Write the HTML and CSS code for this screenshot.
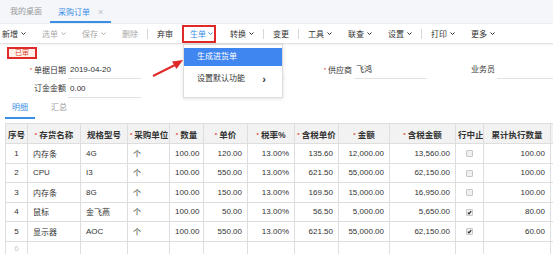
FILE: index.html
```html
<!DOCTYPE html>
<html lang="zh">
<head>
<meta charset="utf-8">
<link rel="stylesheet" href="styles.css">
</head>
<body>
<div class="page">
  <div class="tabbar">
    <span class="tab">我的桌面</span>
    <span class="tab active">采购订单<span class="close">×</span></span>
  </div>

  <div class="toolbar">
    <span class="tb first">新增<svg class="chev" viewBox="0 0 5 3"><path d="M0.5 0.5L2.5 2.5L4.5 0.5"/></svg></span>
    <span class="tb off">选单<svg class="chev" viewBox="0 0 5 3"><path d="M0.5 0.5L2.5 2.5L4.5 0.5"/></svg></span>
    <span class="tb off">保存<svg class="chev" viewBox="0 0 5 3"><path d="M0.5 0.5L2.5 2.5L4.5 0.5"/></svg></span>
    <span class="tb off">删除</span>
    <span class="sep"></span>
    <span class="tb">弃审</span>
    <span class="tb mark">生单<svg class="chev" viewBox="0 0 5 3"><path d="M0.5 0.5L2.5 2.5L4.5 0.5"/></svg>
      <div class="menu">
        <div class="menu-item hl">生成进货单</div>
        <div class="menu-item">设置默认功能<span class="arr">›</span></div>
      </div>
    </span>
    <span class="tb">转换<svg class="chev" viewBox="0 0 5 3"><path d="M0.5 0.5L2.5 2.5L4.5 0.5"/></svg></span>
    <span class="sep"></span>
    <span class="tb">变更</span>
    <span class="sep"></span>
    <span class="tb">工具<svg class="chev" viewBox="0 0 5 3"><path d="M0.5 0.5L2.5 2.5L4.5 0.5"/></svg></span>
    <span class="tb">联查<svg class="chev" viewBox="0 0 5 3"><path d="M0.5 0.5L2.5 2.5L4.5 0.5"/></svg></span>
    <span class="tb">设置<svg class="chev" viewBox="0 0 5 3"><path d="M0.5 0.5L2.5 2.5L4.5 0.5"/></svg></span>
    <span class="sep"></span>
    <span class="tb">打印<svg class="chev" viewBox="0 0 5 3"><path d="M0.5 0.5L2.5 2.5L4.5 0.5"/></svg></span>
    <span class="tb">更多<svg class="chev" viewBox="0 0 5 3"><path d="M0.5 0.5L2.5 2.5L4.5 0.5"/></svg></span>
  </div>

  <div class="status"><span class="stamp">已审</span></div>

  <div class="form">
    <div class="field"><span class="label"><i class="req">*</i>单据日期</span><span class="input">2019-04-20</span></div>
    <div class="field"><span class="label"></span><span class="input"></span></div>
    <div class="field"><span class="label"><i class="req">*</i>供应商</span><span class="input">飞鸿</span></div>
    <div class="field"><span class="label">业务员</span><span class="input"></span></div>
    <div class="field"><span class="label">订金金额</span><span class="input">0.00</span></div>
  </div>

  <div class="subtabs">
    <span class="subtab active">明细</span>
    <span class="subtab">汇总</span>
  </div>

  <table class="grid">
    <colgroup>
      <col class="c-no"><col class="c-name"><col class="c-spec"><col class="c-unit"><col class="c-qty"><col class="c-price"><col class="c-rate"><col class="c-tprice"><col class="c-amt"><col class="c-tamt"><col class="c-stop"><col class="c-exec"><col class="c-more">
    </colgroup>
    <thead>
      <tr>
        <th>序号</th>
        <th><i class="req">*</i>存货名称</th>
        <th>规格型号</th>
        <th><i class="req">*</i>采购单位</th>
        <th><i class="req">*</i>数量</th>
        <th><i class="req">*</i>单价</th>
        <th><i class="req">*</i>税率%</th>
        <th><i class="req">*</i>含税单价</th>
        <th><i class="req">*</i>金额</th>
        <th><i class="req">*</i>含税金额</th>
        <th>行中止</th>
        <th>累计执行数量</th>
        <th></th>
      </tr>
    </thead>
    <tbody>
      <tr>
        <td class="ctr">1</td><td>内存条</td><td>4G</td><td>个</td>
        <td class="num">100.00</td><td class="num">120.00</td><td class="num">13.00%</td><td class="num">135.60</td>
        <td class="num">12,000.00</td><td class="num">13,560.00</td><td class="ctr"><span class="cb"></span></td><td class="num">100.00</td><td></td>
      </tr>
      <tr>
        <td class="ctr">2</td><td>CPU</td><td>I3</td><td>个</td>
        <td class="num">100.00</td><td class="num">550.00</td><td class="num">13.00%</td><td class="num">621.50</td>
        <td class="num">55,000.00</td><td class="num">62,150.00</td><td class="ctr"><span class="cb"></span></td><td class="num">100.00</td><td></td>
      </tr>
      <tr>
        <td class="ctr">3</td><td>内存条</td><td>8G</td><td>个</td>
        <td class="num">100.00</td><td class="num">150.00</td><td class="num">13.00%</td><td class="num">169.50</td>
        <td class="num">15,000.00</td><td class="num">16,950.00</td><td class="ctr"><span class="cb"></span></td><td class="num">100.00</td><td></td>
      </tr>
      <tr>
        <td class="ctr">4</td><td>鼠标</td><td>金飞燕</td><td>个</td>
        <td class="num">100.00</td><td class="num">50.00</td><td class="num">13.00%</td><td class="num">56.50</td>
        <td class="num">5,000.00</td><td class="num">5,650.00</td><td class="ctr"><span class="cb on"><svg viewBox="0 0 6 6"><path d="M1 3.2L2.4 4.6L5 1.4"/></svg></span></td><td class="num">80.00</td><td></td>
      </tr>
      <tr>
        <td class="ctr">5</td><td>显示器</td><td>AOC</td><td>个</td>
        <td class="num">100.00</td><td class="num">550.00</td><td class="num">13.00%</td><td class="num">621.50</td>
        <td class="num">55,000.00</td><td class="num">62,150.00</td><td class="ctr"><span class="cb on"><svg viewBox="0 0 6 6"><path d="M1 3.2L2.4 4.6L5 1.4"/></svg></span></td><td class="num">60.00</td><td></td>
      </tr>
      <tr class="blank">
        <td class="ctr faint">6</td><td></td><td></td><td></td><td></td><td></td><td></td><td></td><td></td><td></td><td></td><td></td><td></td>
      </tr>
    </tbody>
  </table>

  <svg class="arrow" viewBox="0 0 40 24" width="40" height="24">
    <path class="shaft" d="M3 19L25 8"/>
    <path class="head" d="M33 3L22 4.5L26.5 12Z"/>
  </svg>
</div>
</body>
</html>
```

FILE: styles.css
```css
* { box-sizing: border-box; }

html, body {
  margin: 0;
  padding: 0;
  background: #fff;
}

body {
  width: 553px;
  height: 254px;
  overflow: hidden;
  font-family: "Liberation Sans", "Noto Sans CJK SC", sans-serif;
  font-size: 8px;
  color: #333;
}

.page {
  position: relative;
  width: 553px;
  height: 254px;
  overflow: hidden;
}

/* ---- top tabs ---- */
.tabbar {
  height: 24px;
  background: #f4f6fa;
  display: flex;
  align-items: flex-end;
  padding-left: 10px;
  border-bottom: 1px solid #eceff4;
}

.tab {
  height: 23px;
  line-height: 18px;
  padding-top: 3px;
  color: #999;
  margin-right: 8px;
}

.tab.active {
  color: #3a8ee6;
  padding: 3px 8px 0 8px;
  border-bottom: 2px solid #3a8ee6;
}

.close {
  color: #bbb;
  margin-left: 8px;
  font-size: 9px;
}

/* ---- toolbar ---- */
.toolbar {
  height: 20px;
  display: flex;
  align-items: center;
  margin-left: -6px;
  border-bottom: 1px solid #e3e3e3;
  box-shadow: 0 1px 2px rgba(0, 0, 0, 0.06);
  position: relative;
  z-index: 2;
}

.tb {
  display: flex;
  align-items: center;
  padding: 0 8px;
  height: 18px;
  color: #333;
  white-space: nowrap;
}

.tb.off { color: #aaa; }

.chev {
  width: 5px;
  height: 3px;
  margin-left: 3px;
  fill: none;
  stroke: currentColor;
  stroke-width: 1;
}

.sep {
  width: 1px;
  height: 10px;
  background: #d6d6d6;
  margin: 0 1px;
}

.tb.mark {
  position: relative;
  color: #3a8ee6;
  border: 2px solid #e02a2a;
  padding: 0 1px 0 6px;
  margin: 0 6px 0 1px;
}

.tb.mark .chev { margin-left: 2px; stroke: #3a8ee6; }

/* ---- dropdown ---- */
.menu {
  position: absolute;
  left: -1px;
  top: 17px;
  width: 100px;
  height: 54px;
  background: #fff;
  border: 1px solid #dcdcdc;
  box-shadow: 0 1px 4px rgba(0, 0, 0, 0.12);
  padding-top: 3px;
}

.menu-item {
  height: 18px;
  line-height: 18px;
  padding-left: 13px;
  color: #333;
  display: flex;
  align-items: center;
}

.menu-item + .menu-item { margin-top: 4px; }

.menu-item.hl {
  background: #3f86f0;
  color: #fff;
}

.arr {
  margin-left: auto;
  margin-right: 16px;
  font-size: 11px;
  font-weight: bold;
  color: #333;
}

/* ---- status stamp ---- */
.status {
  height: 16px;
  padding: 3px 0 0 7px;
  display: flex;
}

.stamp {
  width: 30px;
  height: 12px;
  border: 2px solid #e02a2a;
  background: #fdf1ea;
  color: #e0432a;
  font-size: 7px;
  line-height: 8px;
  text-align: center;
}

/* ---- form ---- */
.form {
  display: grid;
  grid-template-columns: repeat(4, 143px);
  grid-auto-rows: 19px;
  padding-left: 20px;
}

.field {
  display: flex;
  align-items: flex-end;
}

.label {
  width: 48px;
  text-align: right;
  padding-right: 2px;
  line-height: 16px;
  height: 17px;
  color: #333;
  white-space: nowrap;
}

.input {
  width: 73px;
  height: 17px;
  line-height: 16px;
  border-bottom: 1px solid #e2e2e2;
  padding-left: 2px;
  color: #333;
}

.req {
  font-style: normal;
  color: #e0432a;
  font-size: 6px;
  margin-right: 2px;
  vertical-align: 1px;
}

/* ---- sub tabs ---- */
.subtabs {
  display: flex;
  height: 21px;
  padding-left: 5px;
}

.subtab {
  width: 30px;
  text-align: center;
  line-height: 19px;
  color: #999;
  margin-right: 9px;
}

.subtab.active {
  color: #3a8ee6;
  border-bottom: 2px solid #3a8ee6;
}

/* ---- grid ---- */
.grid {
  margin: 4px 0 0 5px;
  border-collapse: collapse;
  table-layout: fixed;
  width: 565px;
}

.c-no { width: 22px; }
.c-name { width: 53px; }
.c-spec { width: 47px; }
.c-unit { width: 42px; }
.c-qty { width: 34px; }
.c-price { width: 44px; }
.c-rate { width: 47px; }
.c-tprice { width: 44px; }
.c-amt { width: 51px; }
.c-tamt { width: 66px; }
.c-stop { width: 28px; }
.c-exec { width: 67px; }
.c-more { width: 20px; }

.grid th,
.grid td {
  border: 1px solid #dedede;
  padding: 0 5px;
  white-space: nowrap;
  overflow: hidden;
}

.grid th {
  height: 20px;
  background: #f2f2f2;
  font-weight: bold;
  font-size: 8.5px;
  text-align: center;
  color: #333;
  padding: 0 2px;
}

.grid td {
  height: 19.5px;
  text-align: left;
}

.grid td.num { text-align: right; }
.grid td.ctr { text-align: center; padding: 0; }
.grid td.faint { color: #ccc; }

.grid tr.blank td {
  vertical-align: top;
  padding-top: 2px;
  line-height: 9px;
}

.cb {
  display: inline-block;
  width: 7px;
  height: 7px;
  border: 1px solid #c8c8c8;
  background: #f0f0f0;
  border-radius: 1px;
  vertical-align: middle;
  position: relative;
}

.cb.on svg {
  position: absolute;
  left: 0;
  top: 0;
  width: 5px;
  height: 5px;
  fill: none;
  stroke: #222;
  stroke-width: 1.4;
}

/* ---- annotation arrow ---- */
.arrow {
  position: absolute;
  left: 150px;
  top: 57px;
  z-index: 3;
}

.arrow .shaft {
  stroke: #e02a2a;
  stroke-width: 2;
  fill: none;
}

.arrow .head { fill: #e02a2a; }
```
